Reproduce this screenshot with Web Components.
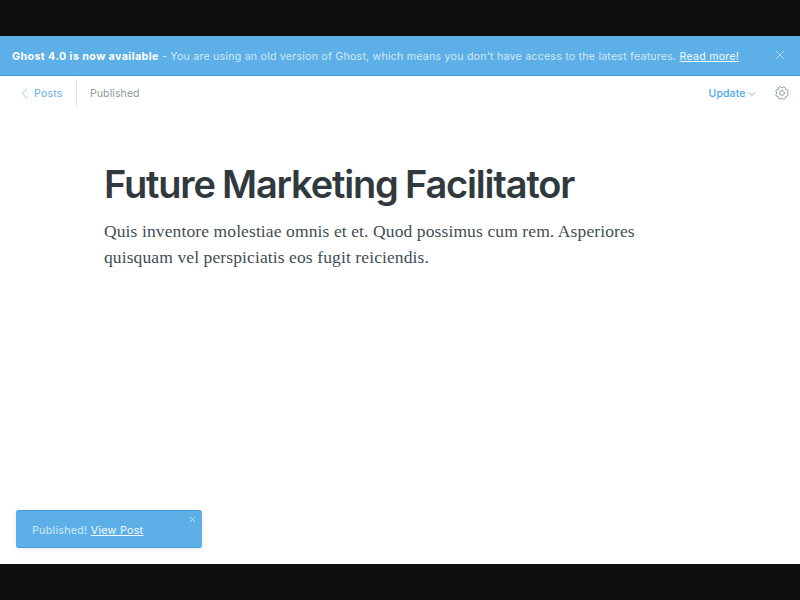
<!DOCTYPE html>
<html lang="en">
<head>
<meta charset="utf-8">
<title>Ghost Editor</title>
<style>
html,body{margin:0;height:100%}
body{font-family:Inter,"Liberation Sans",sans-serif;background:#0e0e0e;overflow:hidden}
</style>
</head>
<body>
<ghost-app></ghost-app>
<script>
const define = (name, html) => customElements.define(name, class extends HTMLElement {
  constructor() {
    super();
    this.attachShadow({ mode: 'open' }).innerHTML = html;
  }
});

define('ghost-alert', `
<style>
:host{display:flex;box-sizing:border-box;height:40px;align-items:center;justify-content:space-between;padding:0 15px 0 12px;background:#5dafe8;border-bottom:1px solid #3f9ae0;color:#cfe9fa;font-size:10.7px;line-height:16px;white-space:nowrap}
.msg{letter-spacing:.19px;padding-top:2px}
svg{display:block;width:10px;height:10px;margin-bottom:1px;fill:none;stroke:#b7dcf6;stroke-width:.9}
</style>
<div class="msg"><slot></slot></div>
<svg viewBox="0 0 10 10"><path d="M1 1l8 8M9 1l-8 8"/></svg>`);

define('editor-header', `
<style>
:host{display:flex;height:35px;align-items:center;font-size:10.5px;line-height:16px;padding:0 11px 0 20px;letter-spacing:.1px}
.back{display:flex;align-items:center;gap:5px;color:#5dafe8;width:56px;letter-spacing:.25px}
.status{box-sizing:border-box;height:29px;border-left:1px solid #dfe8ed;padding-left:13px;line-height:30px;color:#8b9ba3}
.actions{margin-left:auto;display:flex;align-items:center}
.update{color:#4ba6e5;font-weight:500}
svg{display:block;fill:none;stroke-linecap:round;stroke-linejoin:round}
.left{width:9px;height:11px;margin-bottom:1px;stroke:#7fc0ed;stroke-width:.8}
.down{width:8px;height:6px;stroke:#9cadb6;stroke-width:1;margin:1px 19.5px 0 2px}
.gear{width:14px;height:14px;margin-bottom:2px;stroke:#8797a0;stroke-width:.9}
</style>
<div class="back"><svg class="left" viewBox="0 0 9 11"><path d="M7 1L2.2 5.5 7 10"/></svg><slot name="back"></slot></div>
<div class="status"><slot name="status"></slot></div>
<div class="actions"><span class="update"><slot name="action"></slot></span>
<svg class="down" viewBox="0 0 8 6"><path d="M1 1.5l3 3 3-3"/></svg>
<svg class="gear" viewBox="0 0 14 14"><circle cx="7" cy="7" r="2.4"/><path d="M5.2.8Q7 2.8 8.8.8L10.1 1.4Q10 4 12.6 3.9L13.2 5.2Q11.2 7 13.2 8.8L12.6 10.1Q10 10 10.1 12.6L8.8 13.2Q7 11.2 5.2 13.2L3.9 12.6Q4 10 1.4 10.1L.8 8.8Q2.8 7 .8 5.2L1.4 3.9Q4 4 3.9 1.4Z"/></svg></div>`);

define('post-content', `
<style>
:host{display:block;padding:51px 104px 0}
h1{margin:0;font-size:38px;line-height:44px;font-weight:600;letter-spacing:-1.17px;word-spacing:-1.1px;color:#303a3e;white-space:nowrap}
p{margin:13px 0 0;font-family:Georgia,"Liberation Serif",serif;font-size:17.5px;line-height:25.6px;letter-spacing:.11px;color:#414e54;width:560px}
</style>
<h1><slot name="title"></slot></h1><p><slot></slot></p>`);

define('ghost-toast', `
<style>
:host{box-sizing:border-box;display:flex;justify-content:space-between;width:186px;height:38px;padding:0 6px 0 16px;background:#5dafe8;border:1px solid #4299df;border-width:1px 0;border-radius:3px;box-shadow:0 1px 6px rgba(0,0,0,.08);font-size:10.7px;line-height:39px;letter-spacing:.28px;color:#cfe9fa}
svg{display:block;width:7px;height:7px;margin-top:5px;fill:none;stroke:#cfe9fa;stroke-width:.9}
</style>
<div><slot></slot></div><svg viewBox="0 0 7 7"><path d="M1 1l5 5M6 1L1 6"/></svg>`);

define('ghost-app', `
<style>
:host{box-sizing:border-box;display:flex;flex-direction:column;width:800px;height:528px;margin:36px 0;background:#fff}
ghost-toast{margin:auto 0 16px 16px}
b{font-weight:700;color:#fff;letter-spacing:.41px}
u{color:#f4fbff;text-underline-offset:1px}
</style>
<ghost-alert><b>Ghost 4.0 is now available</b> - You are using an old version of Ghost, which means you don't have access to the latest features. <u>Read more!</u></ghost-alert>
<editor-header><span slot="back">Posts</span><span slot="status">Published</span><span slot="action">Update</span></editor-header>
<post-content><span slot="title">Future Marketing Facilitator</span>Quis inventore molestiae omnis et et. Quod possimus cum rem. Asperiores quisquam vel perspiciatis eos fugit reiciendis.</post-content>
<ghost-toast>Published! <u>View Post</u></ghost-toast>`);
</script>
</body>
</html>
